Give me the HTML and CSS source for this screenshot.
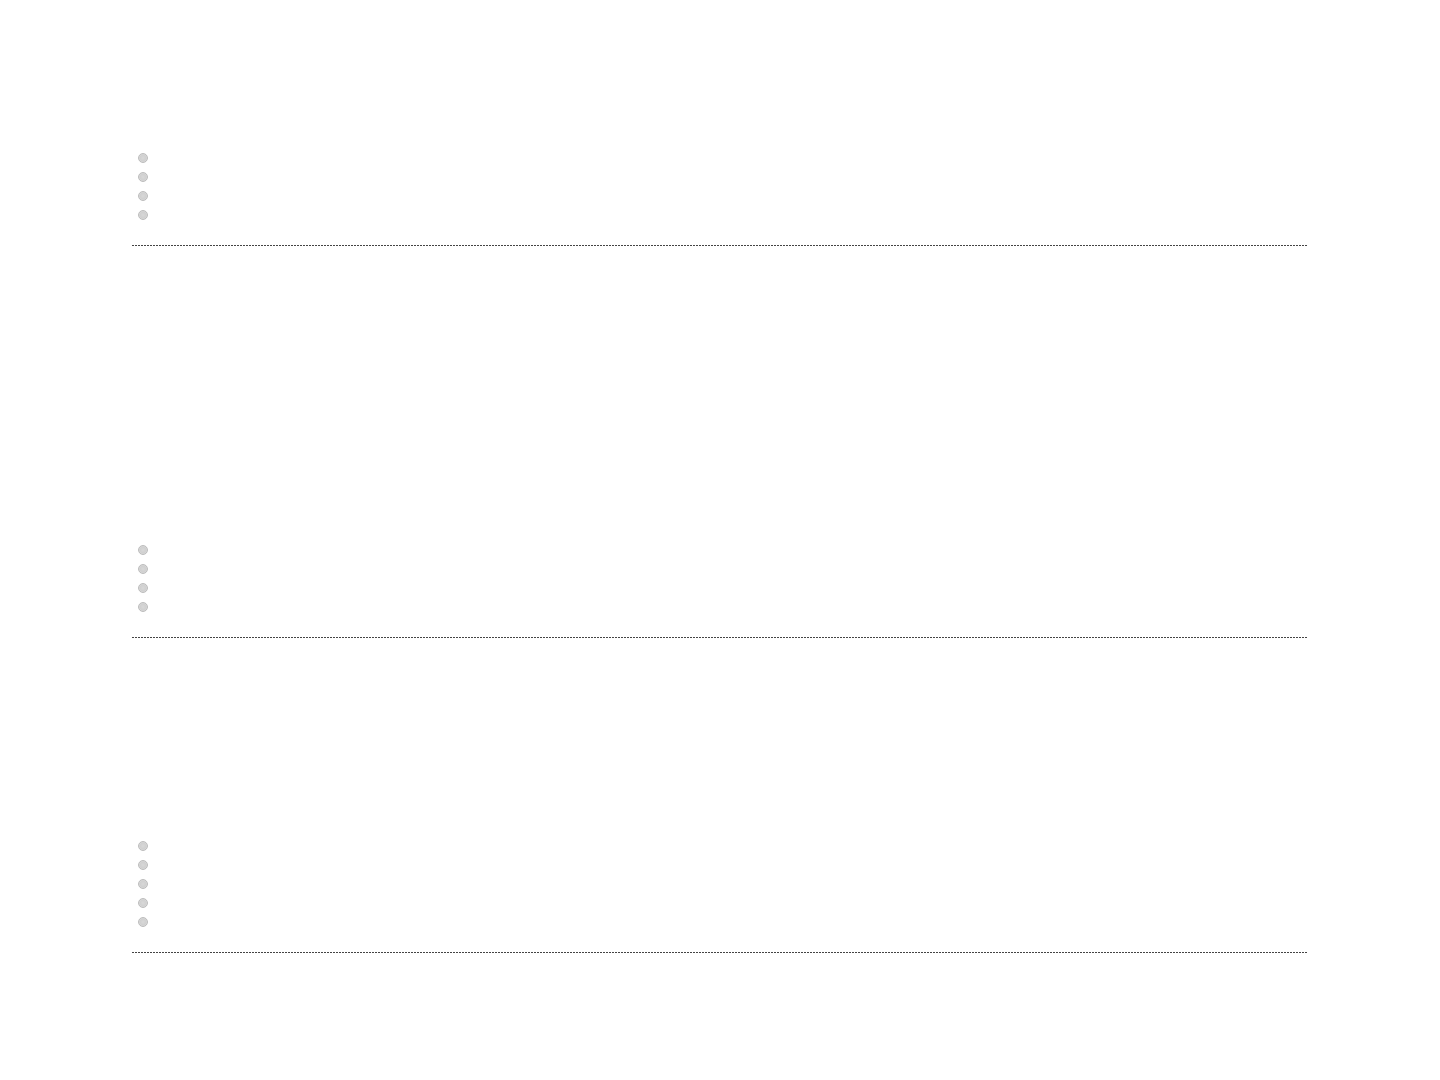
FILE: index.html
```html
<!DOCTYPE html>
<html lang="en">
<head>
<meta charset="utf-8">
<title>Quiz</title>
<link rel="stylesheet" href="styles.css">
</head>
<body>
<div class="page">
  <section class="question q1">
    <ul class="options">
      <li class="option"><input class="radio" type="radio" name="q1"></li>
      <li class="option"><input class="radio" type="radio" name="q1"></li>
      <li class="option"><input class="radio" type="radio" name="q1"></li>
      <li class="option"><input class="radio" type="radio" name="q1"></li>
    </ul>
    <div class="sep"></div>
  </section>
  <section class="question q2">
    <ul class="options">
      <li class="option"><input class="radio" type="radio" name="q2"></li>
      <li class="option"><input class="radio" type="radio" name="q2"></li>
      <li class="option"><input class="radio" type="radio" name="q2"></li>
      <li class="option"><input class="radio" type="radio" name="q2"></li>
    </ul>
    <div class="sep"></div>
  </section>
  <section class="question q3">
    <ul class="options">
      <li class="option"><input class="radio" type="radio" name="q3"></li>
      <li class="option"><input class="radio" type="radio" name="q3"></li>
      <li class="option"><input class="radio" type="radio" name="q3"></li>
      <li class="option"><input class="radio" type="radio" name="q3"></li>
      <li class="option"><input class="radio" type="radio" name="q3"></li>
    </ul>
    <div class="sep"></div>
  </section>
</div>
</body>
</html>
```
FILE: styles.css
```css
html, body {
  margin: 0;
  padding: 0;
  background: #ffffff;
  font-family: "Liberation Sans", Arial, sans-serif;
}
.page {
  width: 1176px;
  margin-left: 132px;
  display: flex;
  flex-direction: column;
}
.question {
  display: flex;
  flex-direction: column;
}
.q1 { padding-top: 148px; }
.q2 { padding-top: 294px; }
.q3 { padding-top: 198px; }
.options {
  list-style: none;
  margin: 0;
  padding: 0;
  display: flex;
  flex-direction: column;
}
.option {
  height: 19px;
  display: flex;
  align-items: center;
  padding-left: 6px;
}
.radio {
  appearance: none;
  -webkit-appearance: none;
  margin: 0;
  width: 10px;
  height: 10px;
  border-radius: 50%;
  box-sizing: border-box;
  border: 1px solid #bcbcbc;
  background: radial-gradient(circle at 50% 50%, #d8d8d8 0%, #d0d0d0 50%, #e6e6e6 100%);
}
.sep {
  margin-top: 21px;
  height: 1px;
  background: repeating-linear-gradient(to right, #444444 0 2px, transparent 2px 3px);
}
```
